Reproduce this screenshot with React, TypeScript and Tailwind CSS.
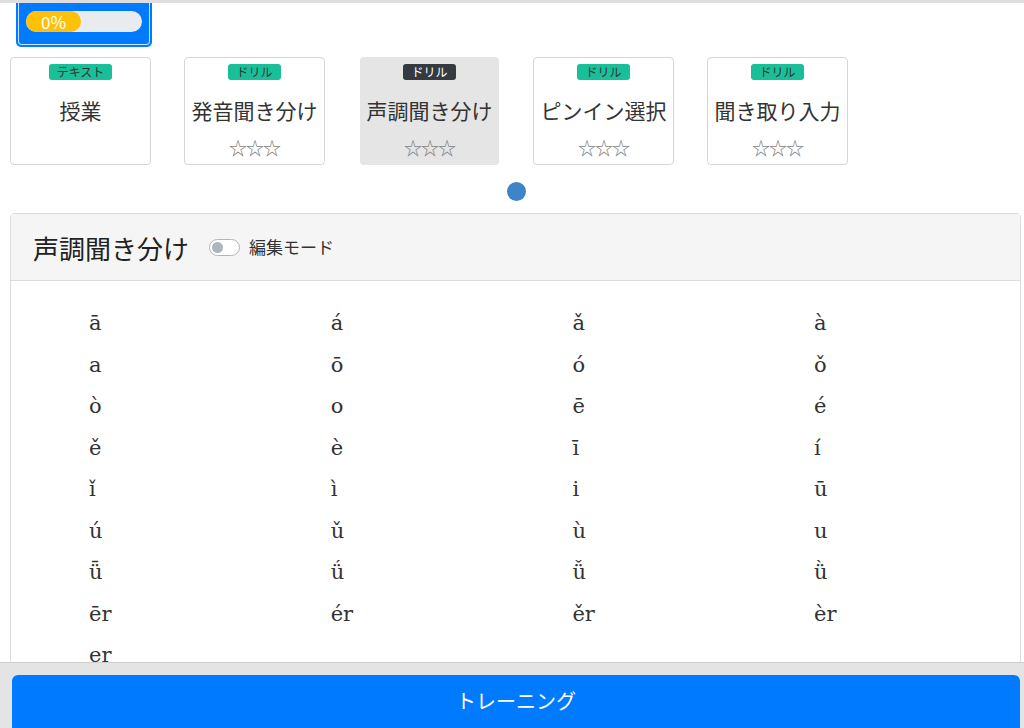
const jp = { fontFamily: '"Noto Sans CJK JP", "Noto Sans", sans-serif' };

const cards = [
  { tag: 'テキスト', title: '授業', stars: false, active: false },
  { tag: 'ドリル', title: '発音聞き分け', stars: true, active: false },
  { tag: 'ドリル', title: '声調聞き分け', stars: true, active: true },
  { tag: 'ドリル', title: 'ピンイン選択', stars: true, active: false },
  { tag: 'ドリル', title: '聞き取り入力', stars: true, active: false },
];

const pinyin = [
  'ā', 'á', 'ǎ', 'à',
  'a', 'ō', 'ó', 'ǒ',
  'ò', 'o', 'ē', 'é',
  'ě', 'è', 'ī', 'í',
  'ǐ', 'ì', 'i', 'ū',
  'ú', 'ǔ', 'ù', 'u',
  'ǖ', 'ǘ', 'ǚ', 'ǜ',
  'ēr', 'ér', 'ěr', 'èr',
  'er',
];

export default function App() {
  return (
    <div className="relative w-[1024px] h-[728px] overflow-hidden bg-white text-[#333]" style={jp}>
      <div className="h-[3px] bg-[#dedede]" />

      {/* current lesson progress (scrolled) */}
      <div className="ml-[16px] w-[136px] h-[44px] rounded-b-[5px] bg-[#007bff] px-[2px] pb-[2px]">
        <div className="h-full rounded-b-[4px] border-x border-b border-white/80 flex items-start pt-[8px] pl-[7px]">
          <div className="w-[116px] h-[21px] rounded-full bg-[#e9ecef] flex">
            <div className="w-[55px] h-full rounded-full bg-[#ffc107] flex items-center justify-center text-white text-[17px] leading-[21px]">
              0%
            </div>
          </div>
        </div>
      </div>

      {/* lesson cards */}
      <div className="mt-[10px] pl-[10px] flex gap-[33px]">
        {cards.map((c) => (
          <div
            key={c.title}
            className={
              c.active
                ? 'ml-[2px] mr-[1px] w-[139px] h-[108px] rounded-[4px] bg-[#e5e5e5] flex flex-col items-center pt-[7px]'
                : 'w-[141px] h-[108px] rounded-[4px] border border-[#d6d6d6] bg-white flex flex-col items-center pt-[6px]'
            }
          >
            <span
              className={
                c.active
                  ? 'h-[16px] px-[8px] rounded-[3px] bg-[#343a40] text-white text-[12px] leading-[16px]'
                  : 'h-[16px] px-[8px] rounded-[3px] bg-[#19bf98] text-[#333] text-[12px] leading-[16px]'
              }
            >
              {c.tag}
            </span>
            <div className="mt-[16px] text-[21px] leading-[28px] text-[#333]">{c.title}</div>
            {c.stars && (
              <div className="mt-[13px] text-[18px] leading-[20px] text-[#7d7d7d] tracking-[-1px]">☆☆☆</div>
            )}
          </div>
        ))}
      </div>

      {/* pager dot */}
      <div className="mt-[17px] flex justify-center pl-[8px]">
        <div className="w-[19px] h-[19px] rounded-full bg-[#3d84c8]" />
      </div>

      {/* drill panel */}
      <div className="mt-[12px] ml-[10px] w-[1011px] rounded-t-[4px] border border-[#dcdcdc]">
        <div className="h-[67px] bg-[#f5f5f5] border-b border-[#dcdcdc] flex items-center pl-[22px]">
          <h2 className="text-[26px] text-[#222]">声調聞き分け</h2>
          <div className="ml-[20px] w-[31px] h-[17px] rounded-full border border-[#adb5bd] bg-white flex items-center pl-[2px]">
            <div className="w-[11px] h-[11px] rounded-full bg-[#adb5bd]" />
          </div>
          <span className="ml-[9px] text-[17px] text-[#333]">編集モード</span>
        </div>
        <div
          className="pt-[22px] pl-[78px] grid grid-cols-[repeat(4,241.7px)] bg-white"
          style={{ fontFamily: '"DejaVu Serif", serif' }}
        >
          {pinyin.map((p, i) => (
            <div key={i} className="h-[41.5px] flex items-center text-[21px] text-[#333]">
              {p}
            </div>
          ))}
        </div>
      </div>

      {/* bottom action bar */}
      <div className="absolute left-0 right-0 bottom-0 h-[66px] bg-[#e4e4e4] border-t border-[#cfcfcf] px-[12px] pt-[12px]">
        <button className="w-[1008px] h-[64px] rounded-[6px] bg-[#007bff] text-white text-[20px] flex justify-center pt-[11px]">
          トレーニング
        </button>
      </div>
    </div>
  );
}
